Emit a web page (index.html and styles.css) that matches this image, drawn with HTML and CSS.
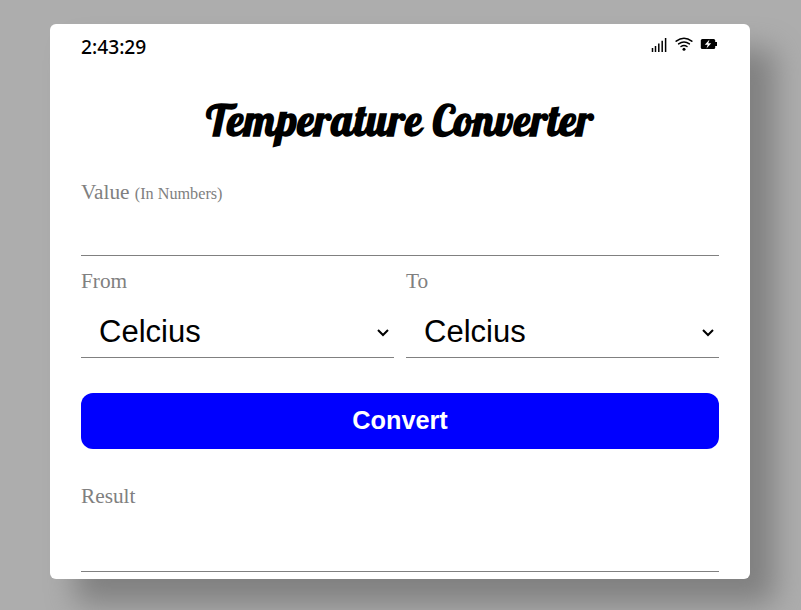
FILE: index.html
```html
<!DOCTYPE html>
<html lang="en">
<head>
<meta charset="utf-8">
<title>Temperature Converter</title>
<link rel="stylesheet" href="styles.css">
</head>
<body>
<main class="card">
  <header class="status">
    <span class="time">2:43:29</span>
    <div class="icons">
      <svg width="18" height="18" viewBox="0 0 18 18"><path d="M2.500 13v4M5.500 11v6M8.800 8.500v8.500M12.200 5.800v11.200M15.600 3v14" fill="none" stroke="#000" stroke-width="1.500"/></svg>
      <svg width="18" height="18" viewBox="0 0 18 18"><g fill="none" stroke="#000" stroke-width="1.500" stroke-linecap="round"><path d="M1.200 6.200Q9 .2 16.800 6.200"/><path d="M3.600 8.900Q9 4.900 14.400 8.900"/><path d="M6 11.500Q9 9.300 12 11.500"/></g><circle cx="9" cy="14.200" r="1.500"/></svg>
      <svg width="18" height="18" viewBox="0 0 18 18"><rect x=".8" y="4" width="14.400" height="10" rx="1.500"/><path d="M15 7h2v4h-2z"/><path d="M9.500 4.500 4.800 9.700h2.900L6.500 13.500l4.700-5.200H8.300z" fill="#fff"/></svg>
    </div>
  </header>
  <h1 class="title">Temperature Converter</h1>
  <label class="label first" for="value">Value <small>(In Numbers)</small></label>
  <input class="field" id="value" type="text">
  <div class="units">
    <div class="unit">
      <label class="label" for="from">From</label>
      <div class="picker">
        <select id="from"><option>Celcius</option></select>
        <svg width="14" height="10" viewBox="0 0 14 10"><path d="M2 3 7 8 12 3" fill="none" stroke="#000" stroke-width="2"/></svg>
      </div>
    </div>
    <div class="unit">
      <label class="label" for="to">To</label>
      <div class="picker">
        <select id="to"><option>Celcius</option></select>
        <svg width="14" height="10" viewBox="0 0 14 10"><path d="M2 3 7 8 12 3" fill="none" stroke="#000" stroke-width="2"/></svg>
      </div>
    </div>
  </div>
  <button class="convert" type="button">Convert</button>
  <label class="label" for="result">Result</label>
  <input class="field result" id="result" type="text" readonly>
</main>
</body>
</html>
```
FILE: styles.css
```css
* { box-sizing: border-box; }

body {
  margin: 0;
  height: 610px;
  padding: 24px 0 0 50px;
  overflow: hidden;
  background: #adadad;
  font-family: "Liberation Serif", serif;
}

.card {
  width: 700px;
  height: 555px;
  padding: 8px 31px 0;
  border-radius: 6px;
  background: #fff;
  box-shadow: 25px 25px 30px #808080;
}

.status {
  display: flex;
  justify-content: space-between;
  height: 30px;
}

.time {
  font: 500 19.200px/30px "Noto Sans", sans-serif;
}

.icons {
  display: flex;
  gap: 7px;
  padding: 3px 1px 0 0;
}

.title {
  height: 60px;
  margin: 28px 0;
  text-align: center;
  white-space: nowrap;
  font: 700 42.600px/60px Lobster, "Liberation Serif", serif;
  letter-spacing: .67px;
}

.label {
  display: block;
  height: 24px;
  color: #808080;
  font-size: 21.300px;
  line-height: 24px;
}

.first {
  height: 22px;
  margin-top: 30px;
}

.label small { font-size: 16.200px; }

.field {
  display: block;
  width: 100%;
  height: 54px;
  padding: 0 17px;
  border: 0;
  border-bottom: 1px solid #808080;
  outline: 0;
  background: transparent;
  font: 31px "Liberation Sans", sans-serif;
}

.units {
  display: grid;
  grid-template-columns: 1fr 1fr;
  gap: 12px;
  margin-top: 13px;
}

.picker {
  display: flex;
  align-items: center;
  height: 65px;
  padding: 14px 4px 0 18px;
  border-bottom: 1px solid #808080;
}

.picker select {
  flex: 1;
  padding: 0;
  border: 0;
  appearance: none;
  background: transparent;
  color: #000;
  font: 31px/36px "Liberation Sans", sans-serif;
}

.convert {
  display: block;
  width: 100%;
  height: 56px;
  margin: 35px 0;
  padding: 0 0 2px;
  border: 0;
  border-radius: 12px;
  background: #00f;
  color: #fff;
  font: 700 25.300px "Liberation Sans", sans-serif;
}

.result { height: 64px; }
```
